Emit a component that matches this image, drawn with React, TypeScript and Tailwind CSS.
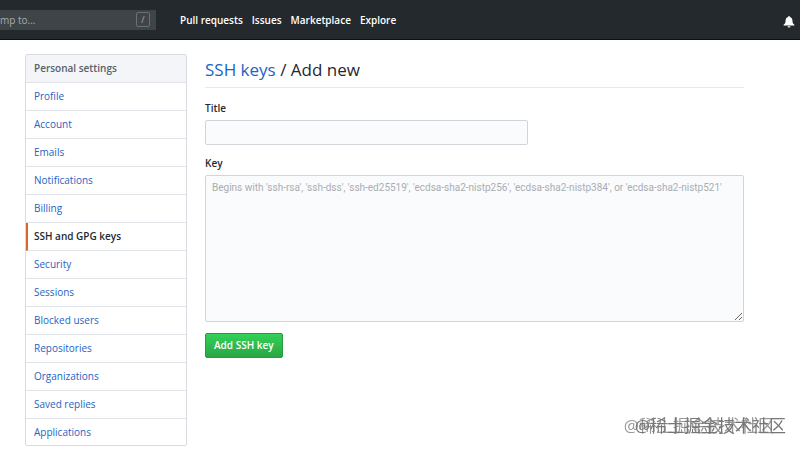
const navLinks = ['Pull requests', 'Issues', 'Marketplace', 'Explore']

const settings = [
  'Profile',
  'Account',
  'Emails',
  'Notifications',
  'Billing',
  'SSH and GPG keys',
  'Security',
  'Sessions',
  'Blocked users',
  'Repositories',
  'Organizations',
  'Saved replies',
  'Applications',
]

function Header() {
  return (
    <header className="flex h-10 items-center border-b border-[#0c1014] bg-[#24292e] pr-[5px] text-white">
      <div className="flex h-5 w-[156px] shrink-0 items-center bg-[#3f4448] pr-1.5">
        <input
          type="text"
          aria-label="Search"
          placeholder="mp to..."
          className="h-5 min-w-0 flex-1 bg-transparent text-[10px] outline-none placeholder:text-[#a8abad]"
        />
        <kbd className="flex h-[15px] w-3.5 items-center justify-center rounded-xs border border-[#6b7074] font-[inherit] text-[9px] text-[#a8abad]">
          /
        </kbd>
      </div>
      <nav className="ml-6 flex gap-[9px] pt-0.5 text-[10px] font-semibold">
        {navLinks.map((label) => (
          <a key={label} href="#" className="whitespace-nowrap">
            {label}
          </a>
        ))}
      </nav>
      <button type="button" aria-label="Notifications" className="ml-auto pt-1">
        <svg viewBox="0 0 12 12" className="size-3" fill="currentColor">
          <path d="M6 0c-.6 0-.9.4-.9.9C3.400 1.300 2.700 2.600 2.600 4.200 2.500 6.800 2 7.800.6 8.800v.8h10.800v-.8C10 7.800 9.500 6.800 9.400 4.200 9.300 2.600 8.600 1.300 6.900.9 6.900.4 6.600 0 6 0zM4.500 10.200a1.500 1.300 0 0 0 3 0z" />
        </svg>
      </button>
    </header>
  )
}

function Sidebar() {
  return (
    <nav className="w-[162px] shrink-0 self-start overflow-hidden rounded-xs border border-[#d8dce0] text-[10px]">
      <h2 className="flex h-7 items-center border-b border-[#e1e4e8] bg-[#f3f5f8] px-2 font-semibold text-[#586069]">
        Personal settings
      </h2>
      {settings.map((label) => (
        <a
          key={label}
          href="#"
          className={
            label === 'SSH and GPG keys'
              ? 'flex h-7 items-center border-b border-l-2 border-[#e1e4e8] border-l-[#d26a2c] pr-2 pl-1.5 font-semibold text-[#24292e]'
              : 'flex h-7 items-center border-b border-[#e1e4e8] px-2 text-[#2563c4] last:h-[26px] last:border-b-0'
          }
        >
          {label}
        </a>
      ))}
    </nav>
  )
}

export default function App() {
  return (
    <div className="min-h-screen bg-white font-['Open_Sans','Noto_Sans_CJK_SC',sans-serif] text-[#24292e]">
      <Header />
      <div className="flex gap-[18px] pt-3.5 pr-14 pl-[25px]">
        <Sidebar />
        <main className="min-w-0 flex-1">
          <h1 className="border-b border-[#e8eaed] pt-1 pb-[5px] text-[17px] leading-6">
            <a href="#" className="text-[#2163c6]">
              SSH keys
            </a>{' '}
            / Add new
          </h1>
          <form className="pt-3 text-[10px]">
            <label htmlFor="title" className="block leading-4 font-semibold">
              Title
            </label>
            <input
              id="title"
              type="text"
              className="mt-1 block h-[25px] w-3/5 rounded-xs border border-[#d1d5da] bg-[#fafbfc] px-1.5"
            />
            <label htmlFor="key" className="mt-2.5 block leading-4 font-semibold">
              Key
            </label>
            <textarea
              id="key"
              placeholder="Begins with 'ssh-rsa', 'ssh-dss', 'ssh-ed25519', 'ecdsa-sha2-nistp256', 'ecdsa-sha2-nistp384', or 'ecdsa-sha2-nistp521'"
              className="mt-1 block h-[147px] w-full rounded-xs border border-[#d1d5da] bg-[#fafbfc] px-1.5 py-1 font-['Roboto',sans-serif] leading-4 placeholder:text-[#a9adb2]"
            />
            <button
              type="button"
              className="mt-[11px] h-[25px] rounded-xs border border-[#279a43] bg-linear-to-b from-[#34d058] to-[#28a745] px-2 font-semibold text-white"
            >
              Add SSH key
            </button>
          </form>
        </main>
      </div>
      {/* Watermark, printed twice with an offset */}
      <p className="fixed right-3.5 bottom-3 text-[17px] leading-6 whitespace-nowrap text-[#777] [text-shadow:-11px_0_#999]">
        @稀土掘金技术社区
      </p>
    </div>
  )
}
